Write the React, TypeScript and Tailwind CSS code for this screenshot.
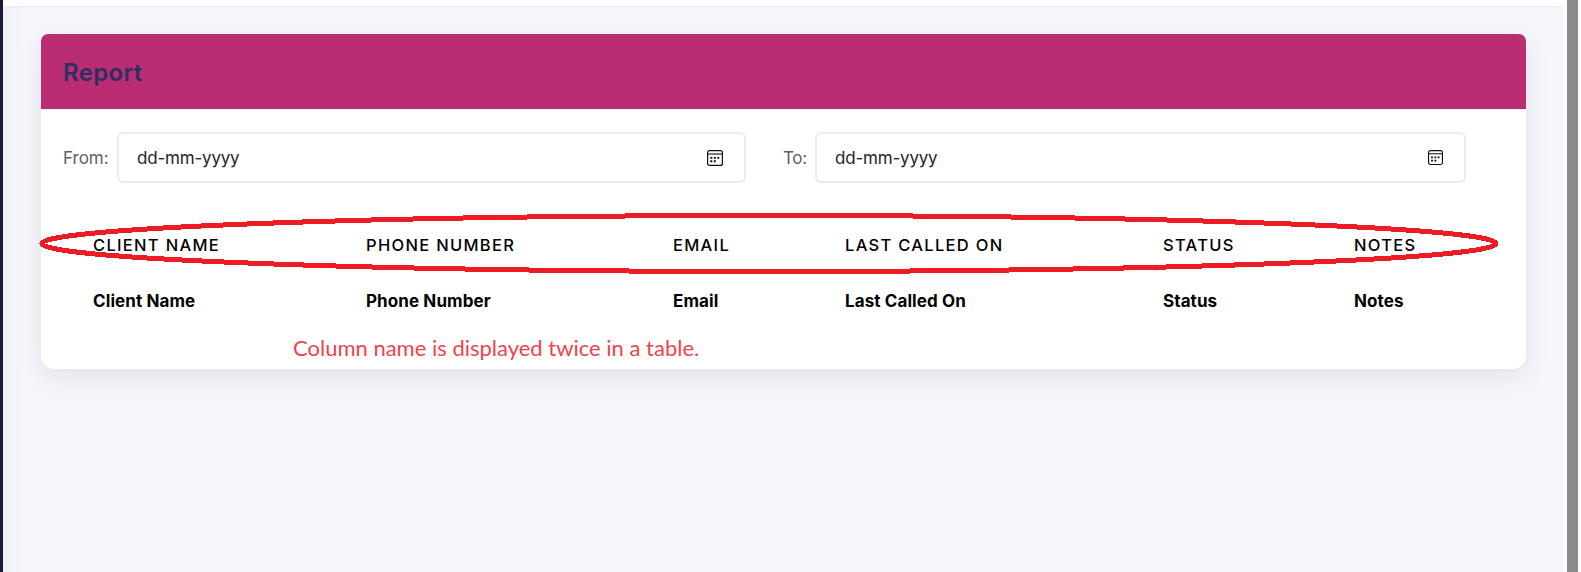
const columns = [
  { name: 'Client Name', width: 'w-[273px]' },
  { name: 'Phone Number', width: 'w-[307px]' },
  { name: 'Email', width: 'w-[172px]' },
  { name: 'Last Called On', width: 'w-[318px]' },
  { name: 'Status', width: 'w-[191px]' },
  { name: 'Notes', width: 'w-[100px]' },
];

function CalendarIcon({ className }: { className: string }) {
  return (
    <svg viewBox="0 0 16 16" className={className} fill="none" stroke="#111111">
      <rect x="0.6" y="0.6" width="14.8" height="14.8" rx="2" strokeWidth="1.2" />
      <path d="M1 4H15" strokeWidth="1.1" />
      <path d="M3.3 7.9h2M6.8 7.9h2M10.3 7.9h2M3.3 11.3h2M6.8 11.3h2" strokeWidth="1.9" />
    </svg>
  );
}

function DateField({ width, icon }: { width: string; icon: string }) {
  return (
    <div className={`${width} flex h-[51px] items-center justify-between rounded-md border-2 border-[#ebebf2] pl-[18px] text-[17px] tracking-[-0.2px] text-[#212529]`}>
      <span className="pt-[2px]">dd-mm-yyyy</span>
      <CalendarIcon className={icon} />
    </div>
  );
}

export default function App() {
  return (
    <div className="flex h-[572px] w-[1581px] overflow-hidden bg-[#f5f7fc] font-['Inter','Liberation_Sans',sans-serif]">
      <aside className="w-[3px] shrink-0 bg-[#171b38]" />
      <main className="w-[1560px] shrink-0 bg-[linear-gradient(to_right,#eff1f7,#f5f7fc_22px)]">
        <div className="h-[7px] border-b border-[#eaecf2] bg-white" />
        <section className="relative mt-[27px] ml-[38px] h-[335px] w-[1485px] rounded-t-[7px] rounded-b-[13px] bg-white shadow-[0_8px_26px_rgba(18,20,40,0.09)]">
          <header className="flex h-[75px] items-center rounded-t-[7px] bg-[#bb2d73] pt-[2px] pl-[22px]">
            <h1 className="text-[24px] font-semibold tracking-[0.35px] text-[#2c2f5f]">Report</h1>
          </header>
          <div className="flex h-[74px] items-end border-t border-[#ececf3] pl-[22px] text-[#5b626b]">
            <label className="flex h-[51px] w-[54px] items-center pt-[2px] text-[17px]">From:</label>
            <DateField width="w-[629px]" icon="mr-[21px] size-4" />
            <label className="ml-[37px] flex h-[51px] w-[32px] items-center pt-[2px] text-[17px] tracking-[-0.3px]">To:</label>
            <DateField width="w-[651px]" icon="mr-[21px] size-[15px]" />
          </div>
          <table className="mt-[34px] ml-[52px] table-fixed border-collapse text-left text-black">
            <thead>
              <tr className="h-[56px]">
                {columns.map((c) => (
                  <th key={c.name} className={`${c.width} p-0 text-[16.5px] font-medium tracking-[1.3px] whitespace-nowrap uppercase`}>{c.name}</th>
                ))}
              </tr>
            </thead>
            <tbody>
              <tr className="h-[56px]">
                {columns.map((c) => (
                  <td key={c.name} className="p-0 pt-[2px] text-[17px] font-bold tracking-[0.1px] whitespace-nowrap">{c.name}</td>
                ))}
              </tr>
            </tbody>
          </table>
          <svg className="pointer-events-none absolute top-[178px] left-[-3px]" width="1462" height="64" shapeRendering="crispEdges">
            <ellipse cx="731" cy="31.5" rx="727" ry="28" fill="none" stroke="#ed1c24" strokeWidth="5" />
          </svg>
          <p className="absolute top-[298px] left-[252px] font-['Lato',sans-serif] text-[22px] leading-[32px] whitespace-nowrap text-[#f0444b]">
            Column name is displayed twice in a table.
          </p>
        </section>
      </main>
      <div className="w-[4px] shrink-0 bg-[#fcfcfc]" />
      <div className="w-[11px] shrink-0 bg-[#8b8b8b]" />
      <div className="w-[3px] shrink-0 bg-[#fcfcfc]" />
    </div>
  );
}
